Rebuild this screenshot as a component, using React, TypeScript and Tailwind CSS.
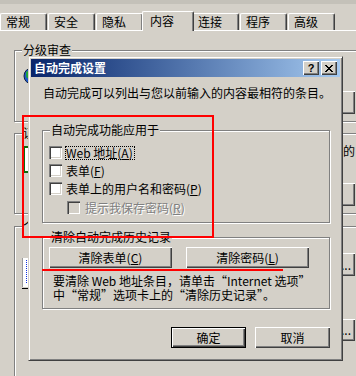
import React from "react";

const RAISED =
  "bg-[#D4D0C8] shadow-[inset_1px_1px_0_#ffffff,inset_-1px_-1px_0_#404040,inset_-2px_-2px_0_#808080]";
const ETCH =
  "relative border border-[#808080] shadow-[inset_1px_1px_0_#ffffff,1px_1px_0_#ffffff]";
const CHECK_ON =
  "block w-[13px] h-[13px] shrink-0 bg-white shadow-[inset_1px_1px_0_#808080,inset_2px_2px_0_#404040,inset_-1px_-1px_0_#ffffff,inset_-2px_-2px_0_#D4D0C8]";
const CHECK_OFF =
  "block w-[13px] h-[13px] shrink-0 bg-[#D4D0C8] shadow-[inset_1px_1px_0_#808080,inset_2px_2px_0_#404040,inset_-1px_-1px_0_#ffffff,inset_-2px_-2px_0_#D4D0C8]";
const TAB =
  "h-[17px] w-[47px] mr-[1px] shrink-0 bg-[#D4D0C8] border-l border-t border-r border-white border-r-[#404040] rounded-t-[2px] shadow-[inset_-1px_0_0_#808080] pl-[5px] pt-[1px] leading-[14px] whitespace-nowrap";
const TAB_SEL =
  "relative z-10 h-[20px] w-[52px] ml-[-2px] mr-[-2px] mb-[-1px] shrink-0 bg-[#D4D0C8] border-l border-t border-r border-white border-r-[#404040] rounded-t-[2px] shadow-[inset_-1px_0_0_#808080] pl-[7px] pt-[2px] leading-[14px] whitespace-nowrap";

function Group({
  label,
  className,
  children,
}: {
  label: string;
  className: string;
  children?: React.ReactNode;
}) {
  return (
    <div className={ETCH + " " + className}>
      <span className="absolute left-[7px] top-[-8px] bg-[#D4D0C8] px-[1px] leading-[14px] whitespace-nowrap">
        {label}
      </span>
      {children}
    </div>
  );
}

function Btn({
  children,
  className,
}: {
  children?: React.ReactNode;
  className: string;
}) {
  return (
    <div
      className={
        RAISED +
        " flex items-center justify-center leading-[14px] whitespace-nowrap " +
        className
      }
    >
      {children}
    </div>
  );
}

function CloseGlyph() {
  return (
    <svg width="8" height="7" viewBox="0 0 8 7" shapeRendering="crispEdges">
      <path
        fill="#000"
        d="M0 0h2v1H0zM6 0h2v1H6zM1 1h2v1H1zM5 1h2v1H5zM2 2h4v1H2zM3 3h2v1H3zM2 4h4v1H2zM1 5h2v1H1zM5 5h2v1H5zM0 6h2v1H0zM6 6h2v1H6z"
      />
    </svg>
  );
}

export default function App() {
  return (
    <div
      lang="zh-CN"
      className="relative w-[356px] h-[376px] overflow-hidden bg-[#D4D0C8] text-[12px] leading-[14px] text-black font-['Noto_Sans_CJK_SC',sans-serif]"
    >
      {/* background window */}
      <div className="h-[4px] bg-[#c4c1b9]" />
      <div className="flex items-end h-[19px] mt-[7px]">
        <div className={TAB}>常规</div>
        <div className={TAB}>安全</div>
        <div className={TAB}>隐私</div>
        <div className={TAB_SEL}>内容</div>
        <div className={TAB}>连接</div>
        <div className={TAB}>程序</div>
        <div className={TAB}>高级</div>
      </div>
      <div className="ml-[-2px] w-[380px] h-[346px] border-t border-l border-white pl-[15px] pt-[19px]">
        <Group label="分级审查" className="w-[349px] h-[72px] flex">
          <svg
            width="20"
            height="20"
            viewBox="0 0 20 20"
            className="ml-[7px] mt-[15px] shrink-0"
          >
            <circle cx="10" cy="10" r="8" fill="#1e58c8" stroke="#102040" />
            <path d="M4 6c2-2 4-1 5 1s-1 4-3 5-2-3-2-6z" fill="#22a83a" />
            <path d="M11 13c2-1 4 0 4 2l-3 2z" fill="#22a83a" />
          </svg>
          <div className="ml-auto mr-[7px] mt-[40px] flex">
            <Btn className="w-[75px] h-[23px]" />
          </div>
        </Group>
        <Group label="证书" className="mt-[11px] w-[349px] h-[81px] flex">
          <div className="ml-[8px] mt-[12px] w-[26px] h-[27px] shrink-0 border-2 border-[#0b6b0b] bg-white" />
          <div className="ml-[30px] flex-1 flex flex-col pr-[7px]">
            <p className="mt-[10px] ml-[264px] whitespace-nowrap">的</p>
            <div className="mt-[25px] flex justify-end">
              <Btn className="w-[75px] h-[23px]" />
            </div>
          </div>
        </Group>
        <Group label="个" className="mt-[12px] w-[349px] h-[160px] flex">
          <svg
            width="20"
            height="32"
            viewBox="0 0 20 32"
            className="ml-[7px] mt-[30px] shrink-0"
            shapeRendering="crispEdges"
          >
            <rect x="1" y="1" width="18" height="29" fill="#ffffff" />
            <rect x="0" y="1" width="1" height="29" fill="#9a9a9a" />
            <line
              x1="4.5"
              y1="3"
              x2="4.5"
              y2="27"
              stroke="#1030e0"
              strokeDasharray="1 1"
            />
            <rect x="0" y="31" width="20" height="1" fill="#000" />
          </svg>
          <div className="ml-auto mr-[7px] mt-[26px] flex flex-col">
            <Btn className="w-[75px] h-[23px] !justify-end pr-[4px]">...</Btn>
            <Btn className="mt-[43px] w-[75px] h-[22px] !justify-end pr-[4px]">...</Btn>
          </div>
        </Group>
      </div>

      {/* dialog */}
      <div className="absolute left-[28px] top-[56px] w-[315px] h-[305px] bg-[#D4D0C8] border border-[#D4D0C8] border-r-[#404040] border-b-[#404040] shadow-[inset_1px_1px_0_#ffffff,inset_-1px_-1px_0_#808080] p-[2px]">
        <div className="flex items-center h-[18px] bg-linear-to-r from-[#0A246A] to-[#A6CAF0] pl-[3px] pr-[3px]">
          <span className="flex-1 font-bold text-white leading-[14px]">
            自动完成设置
          </span>
          <div
            className={
              RAISED +
              " w-[16px] h-[14px] flex items-center justify-center font-bold text-[11px] leading-[11px] font-['Liberation_Sans',sans-serif]"
            }
          >
            ?
          </div>
          <div
            className={
              RAISED + " ml-[2px] w-[16px] h-[14px] flex items-center justify-center"
            }
          >
            <CloseGlyph />
          </div>
        </div>
        <div className="pl-[11px]">
          <p className="mt-[9px] ml-[1px] whitespace-nowrap">
            自动完成可以列出与您以前输入的内容最相符的条目。
          </p>
          <Group label="自动完成功能应用于" className="mt-[30px] w-[288px] h-[93px]">
            <div className="pt-[15px] pl-[6px] flex flex-col">
              <div className="flex items-start">
                <span className={CHECK_ON} />
                <span className="ml-[3px] border border-dotted border-black pr-[1px] leading-[12px] whitespace-nowrap">
                  Web 地址(<u>A</u>)
                </span>
              </div>
              <div className="mt-[4px] flex items-start">
                <span className={CHECK_ON} />
                <span className="ml-[4px] leading-[13px] whitespace-nowrap">
                  表单(<u>F</u>)
                </span>
              </div>
              <div className="mt-[5px] flex items-start">
                <span className={CHECK_ON} />
                <span className="ml-[4px] leading-[13px] whitespace-nowrap">
                  表单上的用户名和密码(<u>P</u>)
                </span>
              </div>
              <div className="mt-[6px] ml-[18px] flex items-start">
                <span className={CHECK_OFF} />
                <span className="ml-[5px] leading-[13px] whitespace-nowrap text-[#808080] [text-shadow:1px_1px_0_#ffffff]">
                  提示我保存密码(<u>R</u>)
                </span>
              </div>
            </div>
          </Group>
          <Group label="清除自动完成历史记录" className="mt-[14px] w-[288px] h-[72px]">
            <div className="pt-[9px] pl-[6px] flex">
              <Btn className="w-[123px] h-[21px]">
                清除表单(<u>C</u>)
              </Btn>
              <Btn className="ml-[14px] w-[123px] h-[21px]">
                清除密码(<u>L</u>)
              </Btn>
            </div>
            <div className="mt-[6px] ml-[10px] flex flex-col">
              <p className="h-[14px] leading-[14px] whitespace-nowrap">
                要清除 Web 地址条目，请单击“Internet 选项”
              </p>
              <p className="h-[14px] leading-[14px] whitespace-nowrap">
                中“常规”选项卡上的“清除历史记录”。
              </p>
            </div>
          </Group>
          <div className="mt-[18px] w-[288px] flex justify-end">
            <div className="w-[75px] h-[21px] border border-black">
              <Btn className="w-full h-full">确定</Btn>
            </div>
            <Btn className="ml-[9px] w-[75px] h-[21px]">取消</Btn>
          </div>
        </div>
      </div>

      {/* red annotations */}
      <div className="absolute left-[22px] top-[115px] w-[192px] h-[123px] border-2 border-[#ff0000]" />
      <div className="absolute left-[42px] top-[269px] w-[241px] h-[2px] bg-[#ff0000]" />
    </div>
  );
}
